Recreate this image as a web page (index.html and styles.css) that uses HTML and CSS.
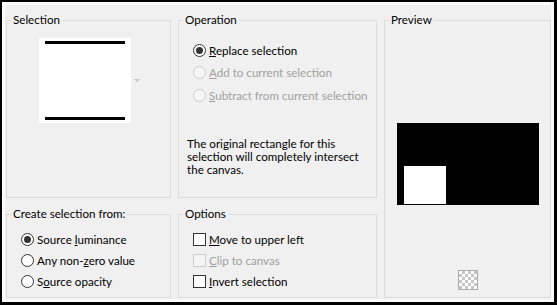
FILE: index.html
```html
<!DOCTYPE html>
<html>
<head>
  <meta charset="UTF-8">
  <title>Selection From Mask</title>
  <link rel="stylesheet" href="styles.css">
</head>
<body>
  <div class="dialog">
    <div class="panes">

      <!-- Selection thumbnail -->
      <fieldset class="group sel">
        <legend>Selection</legend>
        <div class="thumb-row">
          <div class="thumb">
            <span class="bar"></span>
            <span class="bar"></span>
          </div>
          <span class="drop"></span>
        </div>
      </fieldset>

      <!-- Operation -->
      <fieldset class="group op">
        <legend>Operation</legend>
        <div class="choices wide">
          <label class="choice"><input type="radio" name="op" checked><span><u>R</u>eplace selection</span></label>
          <label class="choice off"><input type="radio" name="op" disabled><span><u>A</u>dd to current selection</span></label>
          <label class="choice off"><input type="radio" name="op" disabled><span><u>S</u>ubtract from current selection</span></label>
        </div>
        <p class="note">The original rectangle for this<br>selection will completely intersect<br>the canvas.</p>
      </fieldset>

      <!-- Preview -->
      <fieldset class="group preview">
        <legend>Preview</legend>
        <div class="canvas">
          <div class="mask"></div>
        </div>
        <button class="checker" title="Transparency"></button>
      </fieldset>

      <!-- Source -->
      <fieldset class="group source">
        <legend>Create selection from:</legend>
        <div class="choices">
          <label class="choice"><input type="radio" name="src" checked><span>Source <u>l</u>uminance</span></label>
          <label class="choice"><input type="radio" name="src"><span>Any non-<u>z</u>ero value</span></label>
          <label class="choice"><input type="radio" name="src"><span>S<u>o</u>urce opacity</span></label>
        </div>
      </fieldset>

      <!-- Options -->
      <fieldset class="group options">
        <legend>Options</legend>
        <div class="choices">
          <label class="choice"><input type="checkbox"><span><u>M</u>ove to upper left</span></label>
          <label class="choice off"><input type="checkbox" disabled><span><u>C</u>lip to canvas</span></label>
          <label class="choice"><input type="checkbox"><span><u>I</u>nvert selection</span></label>
        </div>
      </fieldset>

    </div>
  </div>
</body>
</html>
```

FILE: styles.css
```css
* {
  box-sizing: border-box;
}

body {
  margin: 0;
  font-family: 'Lato', sans-serif;
  font-size: 11.6px;
  color: #000;
}

.dialog {
  width: 557px;
  height: 305px;
  border-style: solid;
  border-color: #000;
  border-width: 2px 3px 3px 2px;
  background: #f0f0f0;
}

.panes {
  height: 100%;
  border: 3px solid #fbfbfb;
  padding: 7px 0 0 1px;
  display: grid;
  grid-template-columns: 165px 199px 167px;
  grid-template-rows: 186px 92px;
  column-gap: 7px;
  row-gap: 8px;
}

.group {
  margin: 0;
  padding: 0;
  min-width: 0;
  border: 1px solid #dcdcdc;
  white-space: nowrap;
}

.group legend {
  padding: 0 2px;
  margin-left: 4px;
  line-height: 16px;
}

.sel { grid-area: 1 / 1; }
.op { grid-area: 1 / 2; }
.preview { grid-area: 1 / 3 / 3 / 4; }
.source { grid-area: 2 / 1; }
.options { grid-area: 2 / 2; }

/* selection thumbnail */
.thumb-row {
  display: flex;
  align-items: center;
  gap: 3px;
  margin: 10px 0 0 32px;
}

.thumb {
  width: 92px;
  height: 85px;
  background: #fff;
  padding: 3px 6px;
  display: flex;
  flex-direction: column;
  justify-content: space-between;
}

.bar {
  display: block;
  height: 3px;
  background: #000;
}

.drop {
  width: 0;
  height: 0;
  border-left: 3px solid transparent;
  border-right: 3px solid transparent;
  border-top: 3px solid #c4c4c4;
}

/* radio / checkbox rows */
.choices {
  margin: 7px 0 0 14px;
}

.choices.wide {
  margin-top: 11px;
}

.choice {
  display: flex;
  align-items: center;
  gap: 3px;
  height: 21px;
}

.choices.wide .choice {
  height: 22.5px;
}

.choice input {
  appearance: none;
  margin: 0;
  width: 13px;
  height: 13px;
  border: 1px solid #333;
  background: #fff;
  flex: none;
}

.choice input[type="radio"] {
  border-radius: 50%;
  display: grid;
  place-items: center;
}

.choice input[type="radio"]:checked::after {
  content: "";
  width: 7px;
  height: 7px;
  border-radius: 50%;
  background: #333;
}

.choice.off {
  color: #a0a0a0;
}

.choice.off input {
  border-color: #cccccc;
  background: #f5f5f5;
}

.note {
  margin: 30px 0 0 8px;
  line-height: 13px;
}

/* preview */
.canvas {
  width: 142px;
  height: 82px;
  margin: 95px auto 0;
  background: #000;
  padding: 0 0 1px 7px;
  display: flex;
  align-items: flex-end;
}

.mask {
  width: 42px;
  height: 38px;
  background: #fff;
}

.checker {
  display: block;
  width: 20px;
  height: 20px;
  margin: 65px auto 0;
  padding: 0;
  border: 1px solid #adadad;
  background-color: #fff;
  background-image:
    linear-gradient(45deg, #c6c6c6 25%, transparent 25%, transparent 75%, #c6c6c6 75%),
    linear-gradient(45deg, #c6c6c6 25%, transparent 25%, transparent 75%, #c6c6c6 75%);
  background-size: 6px 6px;
  background-position: 0 0, 3px 3px;
}
```
